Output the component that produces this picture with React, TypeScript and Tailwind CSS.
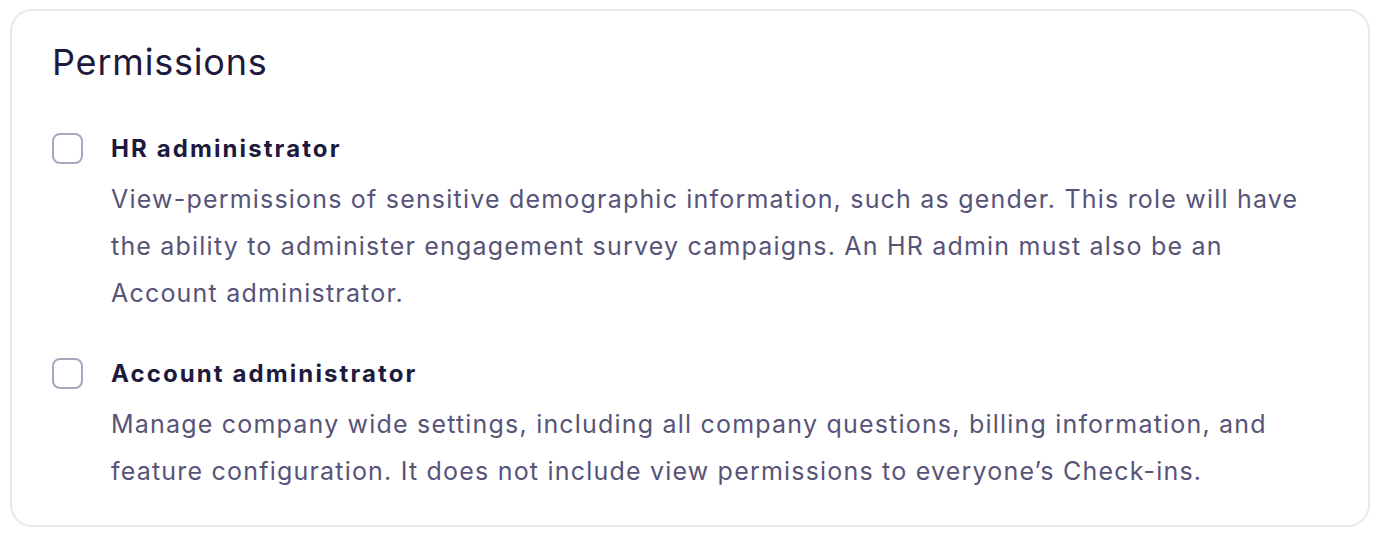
export default function App() {
  const items = [
    {
      title: "HR administrator",
      lines: [
        "View-permissions of sensitive demographic information, such as gender. This role will have",
        "the ability to administer engagement survey campaigns. An HR admin must also be an",
        "Account administrator.",
      ],
    },
    {
      title: "Account administrator",
      lines: [
        "Manage company wide settings, including all company questions, billing information, and",
        "feature configuration. It does not include view permissions to everyone\u2019s Check-ins.",
      ],
    },
  ];
  return (
    <div className="w-[1384px] h-[534px] bg-white pt-[9px] pl-[10px]" style={{ fontFamily: "Inter, 'Noto Sans', sans-serif" }}>
      <div className="w-[1360px] h-[518px] border-2 border-[#e9e8ee] rounded-[22px] px-[40px] pt-[26px]">
        <h2 className="text-[36px] leading-[50px] tracking-[0.8px] text-[#1d1a3e] font-normal">Permissions</h2>
        <div className="mt-[43px] flex flex-col gap-[38px]">
          {items.map((it) => (
            <div key={it.title} className="flex gap-[28px]">
              <div className="mt-[3px] w-[31px] h-[31px] shrink-0 rounded-[8px] border-2 border-[#a9a6bd] bg-white" />
              <div className="flex flex-col">
                <div className="text-[24px] leading-[38px] tracking-[2.1px] font-bold text-[#1d1a3e]">{it.title}</div>
                <p className="mt-[8px] text-[25px] leading-[47px] tracking-[1.2px] text-[#575478]">
                  {it.lines.map((l) => (
                    <span key={l} className="block whitespace-nowrap">{l}</span>
                  ))}
                </p>
              </div>
            </div>
          ))}
        </div>
      </div>
    </div>
  );
}
